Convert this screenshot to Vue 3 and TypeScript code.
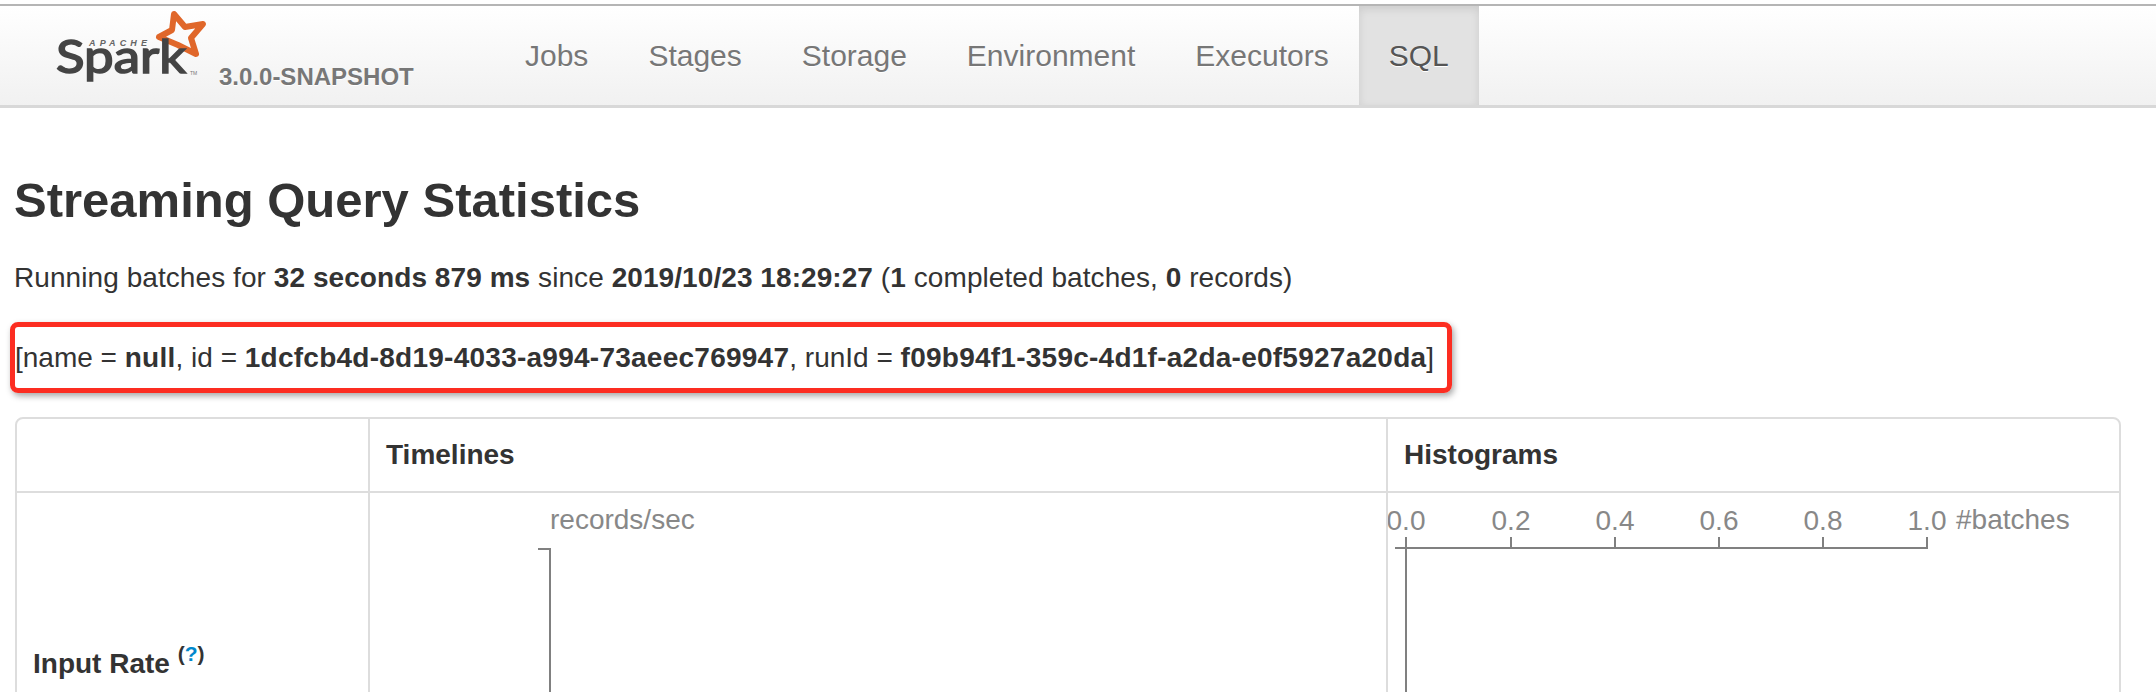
<template>
  <div class="page">
    <header class="navbar">
      <a class="brand">
        <svg class="logo" width="175" height="90" viewBox="0 0 175 90">
          <path class="star" d="M129 9 L140 22 L158 19 L146 33 L151 49 L133 40 L114 32 L127 25 Z" />
          <text class="logo-apache" x="44" y="41" textLength="58" lengthAdjust="spacing">APACHE</text>
          <text class="logo-spark" x="11" y="68" textLength="130" lengthAdjust="spacingAndGlyphs">Spark</text>
          <text class="logo-tm" x="145" y="70">TM</text>
        </svg>
        <span class="version">3.0.0-SNAPSHOT</span>
      </a>
      <nav class="tabs">
        <a v-for="tab in tabs" :key="tab" class="tab" :class="{ active: tab === 'SQL' }">{{ tab }}</a>
      </nav>
    </header>

    <main class="content">
      <h3 class="title">Streaming Query Statistics</h3>
      <p class="summary">
        Running batches for <strong>32 seconds 879 ms</strong> since <strong>2019/10/23 18:29:27</strong>
        (<strong>1</strong> completed batches, <strong>0</strong> records)
      </p>
      <div class="highlight">
        <p class="query-id">
          [name = <strong>null</strong>, id = <strong>1dcfcb4d-8d19-4033-a994-73aeec769947</strong>, runId =
          <strong>f09b94f1-359c-4d1f-a2da-e0f5927a20da</strong>]
        </p>
      </div>

      <table class="stats">
        <thead>
          <tr>
            <th class="col-name"></th>
            <th class="col-timeline">Timelines</th>
            <th class="col-histogram">Histograms</th>
          </tr>
        </thead>
        <tbody>
          <tr>
            <td class="metric">Input Rate <sup class="help">(<a>?</a>)</sup></td>
            <td class="chart">
              <svg class="plot" width="1017" height="342" viewBox="0 0 1017 342">
                <text class="plot-label" x="180" y="36">records/sec</text>
                <path class="axis" d="M168 56 H180 V342" />
              </svg>
            </td>
            <td class="chart">
              <svg class="plot" width="733" height="342" viewBox="0 0 733 342">
                <text v-for="t in histTicks" :key="t.label" class="plot-label" :x="t.x" y="37" text-anchor="middle">{{ t.label }}</text>
                <text class="plot-label" x="568" y="36">#batches</text>
                <path class="axis" d="M7 55 H539 V44" />
                <path v-for="t in histTicks.slice(0, 5)" :key="t.x" class="axis" :d="`M${t.x} 44 V55`" />
                <path class="axis" d="M18 55 V342" />
              </svg>
            </td>
          </tr>
        </tbody>
      </table>
    </main>
  </div>
</template>

<script setup lang="ts">
const tabs: string[] = ['Jobs', 'Stages', 'Storage', 'Environment', 'Executors', 'SQL']

const histTicks = [
  { label: '0.0', x: 18 },
  { label: '0.2', x: 123 },
  { label: '0.4', x: 227 },
  { label: '0.6', x: 331 },
  { label: '0.8', x: 435 },
  { label: '1.0', x: 539 },
]
</script>

<style>
html,
body {
  margin: 0;
  background: #fff;
  overflow: hidden;
}
</style>

<style scoped>
.page {
  height: 692px;
  overflow: hidden;
  font-family: 'Liberation Sans', Arial, sans-serif;
  color: #333;
  padding-top: 4px;
  box-sizing: border-box;
}
.navbar {
  display: flex;
  height: 99px;
  border-top: 2px solid #b5b5b5;
  border-bottom: 3px solid #d8d8d8;
  background: linear-gradient(#fff, #f1f1f1);
}
.brand {
  display: flex;
  width: 525px;
  flex: none;
}
.logo {
  margin: -1px 0 0 45px;
  flex: none;
}
.star {
  fill: none;
  stroke: #e0672a;
  stroke-width: 6;
  stroke-linejoin: round;
}
.logo-apache {
  font: italic bold 9px 'Liberation Sans', sans-serif;
  fill: #666;
}
.logo-spark {
  font: 46px Lato, sans-serif;
  fill: #444;
  stroke: #444;
  stroke-width: 1.6;
}
.logo-tm {
  font: 5px 'Liberation Sans', sans-serif;
  fill: #777;
}
.version {
  margin: 54px 0 0 -1px;
  font-size: 24px;
  line-height: 34px;
  font-weight: bold;
  color: #777;
  text-shadow: 0 1px 0 #fff;
}
.tabs {
  display: flex;
}
.tab {
  padding: 0 30px;
  font-size: 30px;
  line-height: 99px;
  color: #777;
  text-shadow: 0 1px 0 #fff;
}
.tab:first-child {
  padding-left: 0;
}
.tab.active {
  color: #555;
  background: #e2e2e2;
  box-shadow: inset 0 3px 8px rgba(0, 0, 0, 0.1);
}
.content {
  padding: 0 14px;
}
.title {
  margin: 66px 0 0;
  font-size: 49px;
  line-height: 52px;
  font-weight: bold;
}
.summary {
  margin: 32px 0 0;
  font-size: 28px;
  line-height: 40px;
  letter-spacing: 0.07px;
}
.highlight {
  margin: 24px 0 0 -4px;
  width: 1442px;
  height: 71px;
  box-sizing: border-box;
  border: 5px solid #fc2d21;
  border-radius: 8px;
  box-shadow: 2px 3px 6px rgba(0, 0, 0, 0.35);
}
.query-id {
  margin: 0;
  font-size: 28px;
  line-height: 61px;
  white-space: nowrap;
}
.query-id strong {
  letter-spacing: 0.25px;
}
.stats {
  margin: 24px 0 0 1px;
  width: 2106px;
  table-layout: fixed;
  border-collapse: separate;
  border-spacing: 0;
  border: 2px solid #ddd;
  border-radius: 8px;
}
.stats th,
.stats td {
  padding: 0;
  text-align: left;
  vertical-align: middle;
  font-size: 28px;
}
.stats th {
  height: 72px;
  padding-left: 16px;
  font-weight: bold;
  border-left: 2px solid #ddd;
}
.stats th:first-child {
  border-left: none;
}
.col-name {
  width: 335px;
}
.col-timeline {
  width: 1000px;
}
.stats td {
  border-top: 2px solid #ddd;
  border-left: 2px solid #ddd;
}
.stats td:first-child {
  border-left: none;
}
.stats td.metric {
  padding-left: 16px;
  font-weight: bold;
}
.stats td.chart {
  height: 342px;
  vertical-align: top;
}
.plot {
  display: block;
}
.plot-label {
  font-size: 28px;
  fill: #888;
}
.axis {
  fill: none;
  stroke: #808080;
  stroke-width: 2;
}
.help {
  font-size: 21px;
  line-height: 0;
  vertical-align: 12px;
}
.help a {
  color: #0088cc;
}
</style>
